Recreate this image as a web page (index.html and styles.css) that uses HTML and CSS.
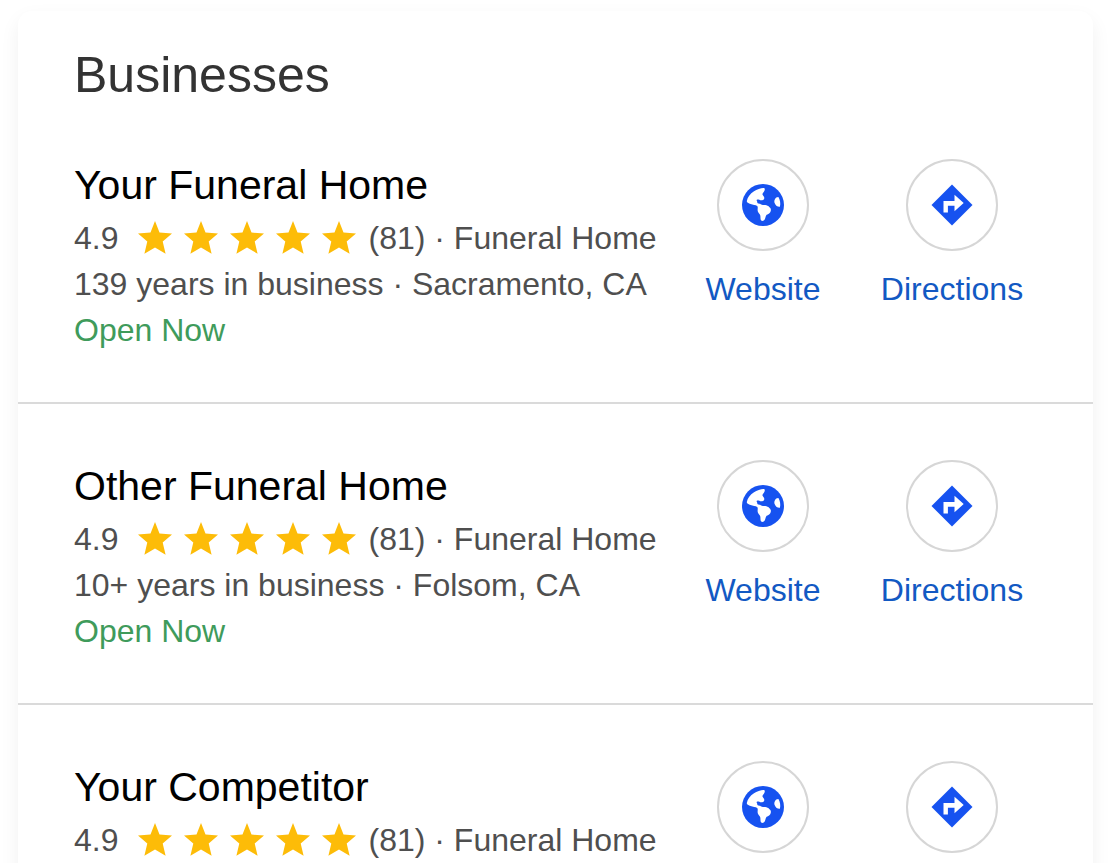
FILE: index.html
```html
<!DOCTYPE html>
<html lang="en">
<head>
<meta charset="utf-8">
<title>Businesses</title>
<link rel="stylesheet" href="styles.css">
</head>
<body>
<svg class="sprite" aria-hidden="true">
  <symbol id="star" viewBox="0 0 34 34"><path d="M17 0l4.500 11.500L34 12.600l-9.300 8 2.900 12.200L17 26.600 6.400 32.800l2.900-12.200L0 12.600l12.500-1.100z"/></symbol>
  <symbol id="globe" viewBox="0 0 42 42">
    <circle cx="21" cy="21" r="21" fill="#1652f0"/>
    <path fill="#fff" d="M4.800 17C5.500 13.500 8 9.500 12 7.200 15 5.200 20 3.600 22 4c1.300.5.900 2.400-.1 3.700-1 1.200-1.700 2-1.300 3.100.5 1.200 1.900 2 1.700 3.400-.2 1.500-1.500 2.200-3.200 2.100-1.300-.1-2.300-.9-3.700-.8-.9.100-.9.900-.5 1.500.5.700.2 1.300.6 1.900.6.800 1.700.4 2.600.9.900.6 1.500 1.200 3.100 1.100 2-.1 4 .1 5.100 1.200 1.200 1.400 2.600 1.900 2.600 3.700 0 1.900-.9 3.500-2.600 4.200-1.400.6-2.100.8-2.500 2.300-.5 1.700-.8 4-2.500 4.500-1.300.3-2.500-.1-2.700-1.600-.3-1.700.1-3.500-.9-4.900-1.100-1.600-2.100-2.500-2.100-4.400 0-1.400.5-2.900-.4-3.800-1.500-1.400-4.500-.9-6.600-2C6.500 19.100 4.600 18.600 4.800 17z"/>
    <path fill="#fff" d="M36.400 12.900c1.700 2.600 2.400 6.700 1.500 9.800-2.400.2-4-1-5.300-3.800-.8-2.300.6-6.100 3.800-6z"/>
  </symbol>
  <symbol id="turn" viewBox="0 0 42 42">
    <path fill="#1652f0" d="M21 0.500L41.500 21 21 41.500 0.500 21z"/>
    <path fill="#fff" d="M12.500 28.500V17h11v-6.300L32.700 19l-9.200 8.300v-5.500h-6.600v6.700z"/>
  </symbol>
</svg>
<main class="card">
  <h1 class="heading">Businesses</h1>

  <article class="item">
    <div class="info">
      <h2 class="name">Your Funeral Home</h2>
      <div class="rating"><span>4.9</span>
        <span class="stars"><svg><use href="#star"/></svg><svg><use href="#star"/></svg><svg><use href="#star"/></svg><svg><use href="#star"/></svg><svg><use href="#star"/></svg></span>
        <span>(81) · Funeral Home</span></div>
      <p>139 years in business · Sacramento, CA</p>
      <p class="open">Open Now</p>
    </div>
    <nav class="actions">
      <a class="action" href="#website"><span class="ring"><svg><use href="#globe"/></svg></span><span class="label">Website</span></a>
      <a class="action" href="#directions"><span class="ring"><svg><use href="#turn"/></svg></span><span class="label">Directions</span></a>
    </nav>
  </article>

  <article class="item">
    <div class="info">
      <h2 class="name">Other Funeral Home</h2>
      <div class="rating"><span>4.9</span>
        <span class="stars"><svg><use href="#star"/></svg><svg><use href="#star"/></svg><svg><use href="#star"/></svg><svg><use href="#star"/></svg><svg><use href="#star"/></svg></span>
        <span>(81) · Funeral Home</span></div>
      <p>10+ years in business · Folsom, CA</p>
      <p class="open">Open Now</p>
    </div>
    <nav class="actions">
      <a class="action" href="#website"><span class="ring"><svg><use href="#globe"/></svg></span><span class="label">Website</span></a>
      <a class="action" href="#directions"><span class="ring"><svg><use href="#turn"/></svg></span><span class="label">Directions</span></a>
    </nav>
  </article>

  <article class="item">
    <div class="info">
      <h2 class="name">Your Competitor</h2>
      <div class="rating"><span>4.9</span>
        <span class="stars"><svg><use href="#star"/></svg><svg><use href="#star"/></svg><svg><use href="#star"/></svg><svg><use href="#star"/></svg><svg><use href="#star"/></svg></span>
        <span>(81) · Funeral Home</span></div>
    </div>
    <nav class="actions">
      <a class="action website" href="#website" aria-label="Website"><span class="ring"><svg><use href="#globe"/></svg></span></a>
      <a class="action directions" href="#directions" aria-label="Directions"><span class="ring"><svg><use href="#turn"/></svg></span></a>
    </nav>
  </article>
</main>
</body>
</html>
```
FILE: styles.css
```css
* { box-sizing: border-box; }
body {
  margin: 0;
  height: 100vh;
  overflow: hidden;
  background: #fff;
  color: #4f4f4f;
  font: 32px/46px "Liberation Sans", Arial, sans-serif;
}
h1, h2, p { margin: 0; font-weight: 400; }
.sprite { display: none; }
.card {
  margin: 11px 19px 0 18px;
  padding-top: 36px;
  border-radius: 14px;
  background: #fff;
  box-shadow: 0 8px 20px rgba(0, 0, 0, 0.06);
}
.heading {
  padding-left: 56px;
  font-size: 50px;
  line-height: 56px;
  color: #333;
}
.item {
  display: flex;
  justify-content: space-between;
  padding: 54px 56px 49px;
  border-bottom: 2px solid #dadada;
  white-space: nowrap;
}
.name {
  margin-bottom: 2px;
  font-size: 41px;
  line-height: 56px;
  color: #000;
}
.rating { display: flex; }
.stars {
  display: flex;
  align-items: center;
  gap: 12px;
  margin: 0 12px 0 20px;
}
.stars svg { width: 34px; height: 34px; fill: #fdbc08; }
.open { color: #3f9b5b; }
.actions {
  display: grid;
  grid-template-columns: 170px 170px;
  align-items: start;
  gap: 19px;
  padding-top: 2px;
}
.action {
  display: flex;
  flex-direction: column;
  align-items: center;
  gap: 15px;
  color: #1259c3;
  text-decoration: none;
}
.ring {
  display: grid;
  place-items: center;
  width: 92px;
  height: 92px;
  border: 2px solid #d6d6d6;
  border-radius: 50%;
}
.ring svg { width: 42px; height: 42px; }
```
